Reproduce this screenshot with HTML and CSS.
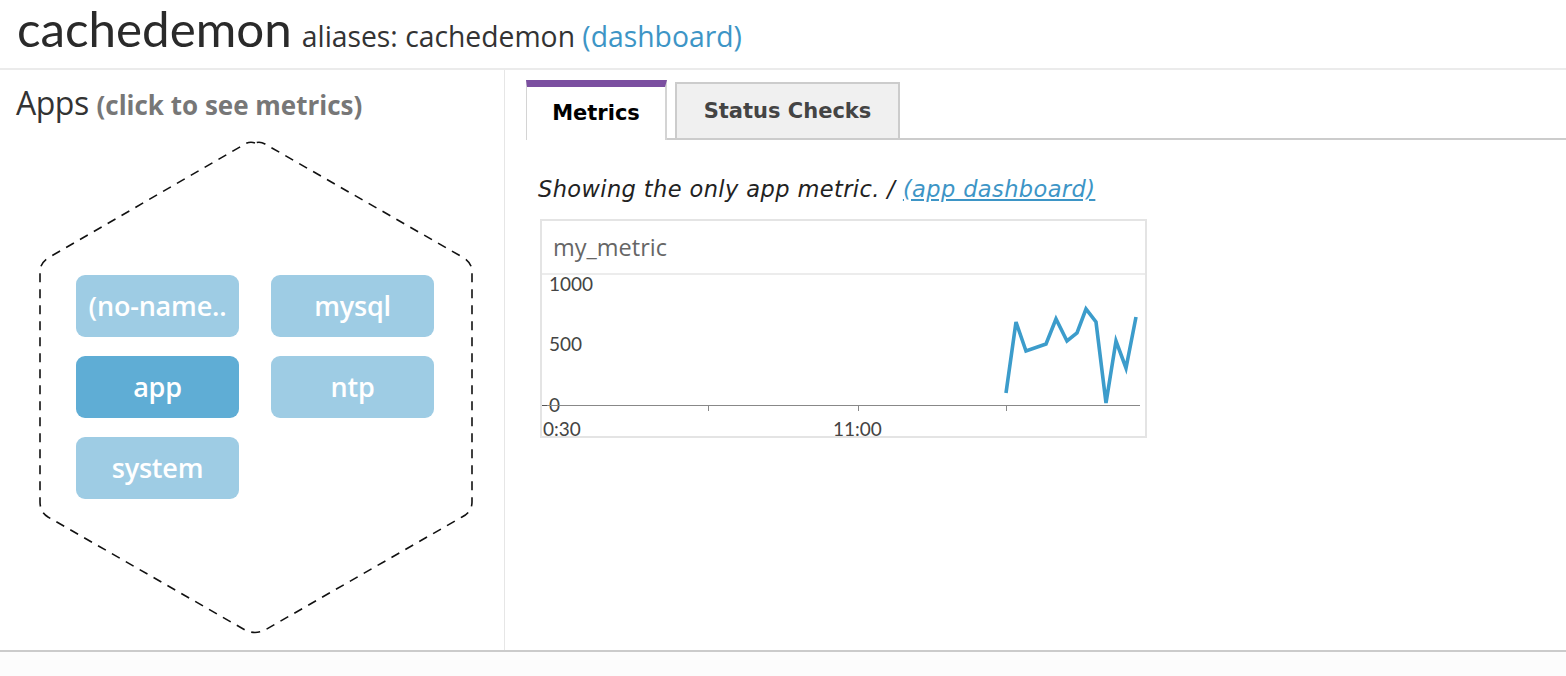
FILE: index.html
```html
<!DOCTYPE html>
<html>
<head>
<meta charset="utf-8">
<link rel="stylesheet" href="styles.css">
</head>
<body>
<div class="page">
  <header class="host-header">
    <span class="host-name">cachedemon</span>
    <span class="aliases">aliases: cachedemon <a class="link">(dashboard)</a></span>
  </header>
  <div class="main">
    <section class="apps-panel">
      <h2 class="apps-title">Apps <span class="hint">(click to see metrics)</span></h2>
      <div class="hex">
        <svg class="hex-outline" width="436" height="494" viewBox="0 0 436 494">
          <path d="M217 3 Q212 1 207 4 L10 118 Q2 123 2 132 L2 362 Q2 372 10 377 L207 490 Q217 495 227 490 L424 377 Q434 372 434 362 L434 132 Q434 123 426 118 L227 4 Q222 1 217 3 Z" fill="none" stroke="#111" stroke-width="1.6" stroke-dasharray="9 7"/>
        </svg>
        <div class="app-grid">
          <div class="app-btn">(no-name..</div>
          <div class="app-btn">mysql</div>
          <div class="app-btn active">app</div>
          <div class="app-btn">ntp</div>
          <div class="app-btn">system</div>
        </div>
      </div>
    </section>
    <section class="content">
      <div class="tabs">
        <div class="tab selected">Metrics</div>
        <div class="tab">Status Checks</div>
      </div>
      <p class="showing">Showing the only app metric. / <a class="link underline">(app dashboard)</a></p>
      <div class="graph">
        <div class="graph-title">my_metric</div>
        <div class="graph-body">
          <svg width="603" height="161" viewBox="0 0 603 161">
            <g class="axis-text">
              <text x="7" y="16">1000</text>
              <text x="7" y="76">500</text>
              <text x="7" y="137">0</text>
              <text x="1" y="161">0:30</text>
              <text x="291" y="161">11:00</text>
            </g>
            <line x1="0" y1="130.5" x2="598" y2="130.5" stroke="#888" stroke-width="1"/>
            <line x1="0" y1="130.5" x2="5" y2="130.5" stroke="#555" stroke-width="1"/>
            <line x1="166.5" y1="130" x2="166.5" y2="136" stroke="#888" stroke-width="1"/>
            <line x1="316.5" y1="130" x2="316.5" y2="136" stroke="#888" stroke-width="1"/>
            <line x1="464.5" y1="130" x2="464.5" y2="136" stroke="#888" stroke-width="1"/>
            <polyline fill="none" stroke="#3c9ccb" stroke-width="3.6" stroke-linejoin="miter" points="464,118 474,47 484,76 504,69 514,44 525,66 535,58 544,34 554,47 564,128 574,66 584,93 594,42"/>
          </svg>
        </div>
      </div>
    </section>
  </div>
</div>
</body>
</html>
```

FILE: styles.css
```css
html, body {
  margin: 0;
  padding: 0;
}
body {
  background: #fcfcfc;
  font-family: "Open Sans", "Liberation Sans", sans-serif;
  color: #333;
}
.page {
  background: #fff;
  height: 650px;
  border-bottom: 2px solid #cbcbcb;
  box-shadow: 0 2px 4px rgba(0,0,0,0.12);
}
.host-header {
  box-sizing: border-box;
  height: 70px;
  border-bottom: 2px solid #ebebeb;
  padding-left: 17px;
  display: flex;
  align-items: baseline;
  gap: 10px;
}
.host-name {
  font-family: "Lato", "Liberation Sans", sans-serif;
  font-size: 49.3px;
  line-height: 56px;
  color: #2a2a2a;
}
.aliases {
  font-family: "Open Sans", "Liberation Sans", sans-serif;
  font-size: 28.3px;
  letter-spacing: 0;
  color: #333;
}
.link {
  color: #3d95c6;
  text-decoration: none;
}
.underline {
  text-decoration: underline;
}
.main {
  display: flex;
  height: 580px;
}
.apps-panel {
  width: 505px;
  border-right: 1px solid #e6e6e6;
  box-sizing: border-box;
  padding: 0 0 0 16px;
}
.apps-title {
  margin: 13px 0 0 0;
  font-family: "Open Sans", "Liberation Sans", sans-serif;
  font-weight: normal;
  font-size: 32px;
  line-height: 40px;
  color: #333;
  letter-spacing: -0.5px;
}
.hint {
  font-size: 26px;
  font-weight: bold;
  color: #777;
  letter-spacing: 0;
}
.hex {
  position: relative;
  margin: 15px 0 0 22px;
  width: 436px;
  height: 494px;
}
.hex-outline {
  position: absolute;
  left: 0;
  top: 0;
}
.app-grid {
  position: relative;
  display: grid;
  grid-template-columns: 163px 163px;
  column-gap: 32px;
  row-gap: 19px;
  padding: 135px 0 0 38px;
}
.app-btn {
  height: 62px;
  border-radius: 9px;
  background: #9ecce4;
  color: #fff;
  font-family: "Open Sans", "Liberation Sans", sans-serif;
  font-weight: 600;
  font-size: 27px;
  letter-spacing: -0.2px;
  display: flex;
  align-items: center;
  justify-content: center;
  padding-bottom: 2px;
  box-sizing: border-box;
}
.app-btn.active {
  background: #5fadd5;
}
.content {
  flex: 1;
  padding: 10px 0 0 21px;
}
.tabs {
  display: flex;
  align-items: flex-end;
  border-bottom: 2px solid #cccccc;
  height: 58px;
  gap: 8px;
}
.tab {
  box-sizing: border-box;
  font-family: "DejaVu Sans", sans-serif;
  font-weight: bold;
  font-size: 21px;
  display: flex;
  align-items: center;
  justify-content: center;
}
.tab.selected {
  width: 141px;
  height: 60px;
  margin-bottom: -2px;
  background: #fff;
  border-top: 7px solid #7b4fa0;
  border-left: 1px solid #d4d4d4;
  border-right: 2px solid #d4d4d4;
  color: #000;
  padding-bottom: 2px;
}
.tab:not(.selected) {
  width: 225px;
  height: 56px;
  background: #f0f0f0;
  border: 2px solid #cccccc;
  border-bottom: none;
  color: #444;
}
.showing {
  margin: 36px 0 0 12px;
  font-family: "DejaVu Sans", sans-serif;
  font-style: italic;
  font-size: 22.5px;
  letter-spacing: 0.4px;
  color: #222;
}
.graph {
  box-sizing: border-box;
  margin: 17px 0 0 14px;
  width: 607px;
  border: 2px solid #e4e4e4;
  background: #fff;
}
.graph-title {
  height: 52px;
  border-bottom: 2px solid #ececec;
  font-family: "Open Sans", "Liberation Sans", sans-serif;
  font-size: 23.5px;
  color: #666;
  padding-left: 11px;
  display: flex;
  align-items: center;
}
.graph-body {
  height: 161px;
}
.graph-body svg {
  display: block;
  overflow: visible;
}
.axis-text text {
  font-family: "Lato", "Liberation Sans", sans-serif;
  font-size: 19px;
  fill: #444;
}
```
